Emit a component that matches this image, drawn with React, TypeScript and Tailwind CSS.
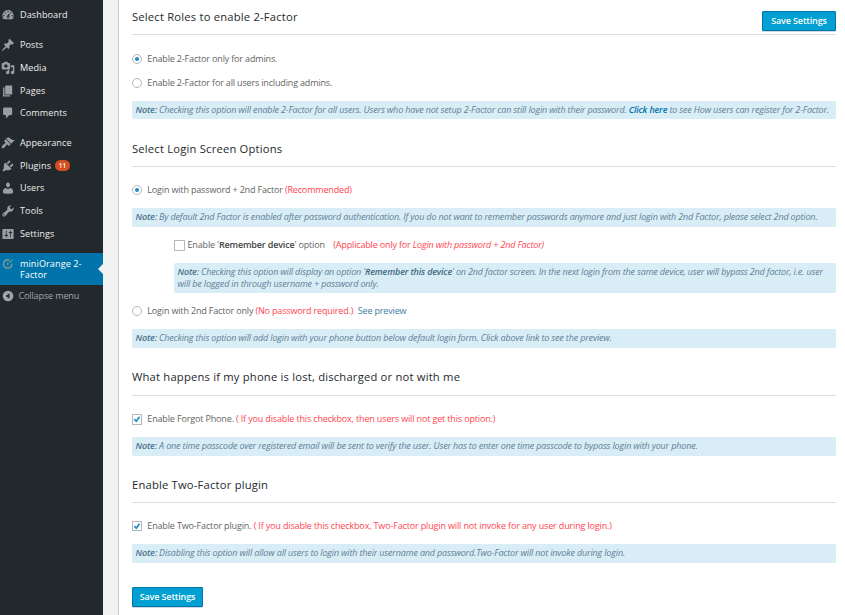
import type { ReactNode } from "react";

const ICONS: Record<string, string> = {
  dashboard:
    "M3.76 16h12.48c1.1-1.37 1.76-3.11 1.76-5 0-4.42-3.58-8-8-8s-8 3.58-8 8c0 1.89.66 3.63 1.76 5zM10 4c.55 0 1 .45 1 1s-.45 1-1 1-1-.45-1-1 .45-1 1-1zM6 6c.55 0 1 .45 1 1s-.45 1-1 1-1-.45-1-1 .45-1 1-1zm8 0c.55 0 1 .45 1 1s-.45 1-1 1-1-.45-1-1 .45-1 1-1zm-5.37 5.55L12 7v6c0 1.1-.9 2-2 2s-2-.9-2-2c0-.57.24-1.08.63-1.45zM4 10c.55 0 1 .45 1 1s-.45 1-1 1-1-.45-1-1 .45-1 1-1zm12 0c.55 0 1 .45 1 1s-.45 1-1 1-1-.45-1-1 .45-1 1-1zm-5 3c0-.55-.45-1-1-1s-1 .45-1 1 .45 1 1 1 1-.45 1-1z",
  posts:
    "M10.44 3.02l1.82-1.82 6.36 6.35-1.83 1.82c-1.05-.68-2.48-.57-3.41.36l-.75.75c-.92.93-1.04 2.35-.35 3.41l-1.83 1.82-2.41-2.41-2.8 2.79c-.42.42-3.38 2.71-3.8 2.29s1.86-3.39 2.28-3.81l2.79-2.79L4.1 9.36l1.83-1.82c1.05.69 2.48.57 3.4-.36l.75-.75c.93-.92 1.05-2.35.36-3.41z",
  media:
    "M13 11V4c0-.55-.45-1-1-1h-1.67L9 1H5L3.67 3H2c-.55 0-1 .45-1 1v7c0 .55.45 1 1 1h10c.55 0 1-.45 1-1zM7 4.5c1.38 0 2.5 1.12 2.5 2.5S8.38 9.5 7 9.5 4.5 8.38 4.5 7 5.62 4.5 7 4.5zM14 6h5v10.5c0 1.38-1.12 2.5-2.5 2.5S14 17.88 14 16.5s1.12-2.5 2.5-2.5c.17 0 .34.02.5.05V9h-3V6zm-4 8.05V13h2v3.5c0 1.38-1.12 2.5-2.5 2.5S7 17.88 7 16.5 8.12 14 9.5 14c.17 0 .34.02.5.05z",
  pages: "M6 15V2h10v13H6zm-1 1h8v2H3V5h2v11z",
  comments: "M5 2h9c1.1 0 2 .9 2 2v7c0 1.1-.9 2-2 2h-2l-5 5v-5H5c-1.1 0-2-.9-2-2V4c0-1.1.9-2 2-2z",
  appearance:
    "M14.48 11.06L7.41 3.99l1.5-1.5c.5-.56 2.3-.47 3.51.32 1.21.8 1.43 1.28 2.91 2.1 1.18.64 2.45 1.26 4.45.85zM13.77 11.77L6.7 4.7 4.93 6.47c-.39.39-.39 1.02 0 1.41l1.06 1.06c.39.39.39 1.03 0 1.42-.6.6-1.43 1.11-2.21 1.69-.35.26-.7.53-1.01.84C1.43 14.23.4 16.08 1.4 17.07c.99 1 2.84-.03 4.18-1.36.31-.31.58-.66.85-1.02.57-.78 1.08-1.61 1.69-2.21.39-.39 1.02-.39 1.41 0l1.06 1.06c.39.39 1.02.39 1.41 0z",
  plugins:
    "M13.11 4.36L9.87 7.6 8 5.73l3.24-3.24c.35-.34 1.05-.2 1.56.32.52.51.66 1.21.31 1.55zm-8 1.77l.91-1.12 9.01 9.01-1.19.84c-.71.71-2.63 1.16-3.82 1.16H6.14L4.9 17.26c-.59.59-1.54.59-2.12 0-.59-.58-.59-1.53 0-2.12l1.24-1.24v-3.88c0-1.13.4-3.19 1.09-3.89zm7.26 3.97l3.24-3.24c.34-.35 1.04-.21 1.55.31.52.51.66 1.21.31 1.55l-3.24 3.25z",
  users:
    "M10 9.25c-2.27 0-2.73-3.44-2.73-3.44C7 4.02 7.82 2 9.97 2c2.16 0 2.98 2.02 2.71 3.81 0 0-.41 3.44-2.68 3.44zm0 2.57L12.72 10c2.39 0 4.52 2.33 4.52 4.53v2.49s-3.65 1.13-7.24 1.13c-3.65 0-7.24-1.13-7.24-1.13v-2.49c0-2.25 1.94-4.48 4.47-4.48z",
  tools:
    "M16.68 9.77c-1.34 1.34-3.3 1.67-4.95.99l-5.41 6.52c-.99.99-2.59.99-3.58 0s-.99-2.59 0-3.57l6.52-5.42c-.68-1.65-.35-3.61.99-4.95 1.28-1.28 3.12-1.62 4.72-1.06l-2.89 2.89 2.82 2.82 2.86-2.87c.53 1.58.18 3.39-1.08 4.65zM3.81 16.21c.4.39 1.04.39 1.43 0 .4-.4.4-1.04 0-1.43-.39-.4-1.03-.4-1.43 0-.39.39-.39 1.03 0 1.43z",
  settings:
    "M18 16V4c0-.55-.45-1-1-1H3c-.55 0-1 .45-1 1v12c0 .55.45 1 1 1h14c.55 0 1-.45 1-1zM8 11h1c.55 0 1 .45 1 1s-.45 1-1 1H8v1.5c0 .28-.22.5-.5.5s-.5-.22-.5-.5V13H6c-.55 0-1-.45-1-1s.45-1 1-1h1V5.5c0-.28.22-.5.5-.5s.5.22.5.5V11zm5-2h-1c-.55 0-1-.45-1-1s.45-1 1-1h1V5.5c0-.28.22-.5.5-.5s.5.22.5.5V7h1c.55 0 1 .45 1 1s-.45 1-1 1h-1v5.5c0 .28-.22.5-.5.5s-.5-.22-.5-.5V9z",
};

function MenuItem({ icon, label, badge, className }: { icon: string; label: string; badge?: string; className: string }) {
  return (
    <a className={`flex items-center text-[#eee] ${className}`}>
      <svg viewBox="0 0 20 20" className="ml-px mt-px h-[14px] w-[14px] shrink-0 fill-[#999ea3]">
        <path fillRule="evenodd" d={ICONS[icon]} />
      </svg>
      <span className="ml-[5px]">{label}</span>
      {badge && (
        <span className="ml-1 flex h-[11px] w-[15px] items-center justify-center rounded-full bg-[#d54e21] text-[6.5px] font-semibold text-white">
          {badge}
        </span>
      )}
    </a>
  );
}

function Heading({ children, className }: { children: ReactNode; className: string }) {
  return (
    <h3 className={`text-[11.2px] font-medium leading-[20px] tracking-[0.21px] text-[#23282d] ${className}`}>
      {children}
    </h3>
  );
}

function Note({ children, className = "" }: { children: ReactNode; className?: string }) {
  return (
    <div className={`whitespace-nowrap rounded-[2px] bg-[#d9edf7] pl-[3.5px] italic text-[#5f7f94] ${className}`}>
      <b className="font-semibold text-[#4a7389]">Note:</b> {children}
    </div>
  );
}

function Radio({ checked }: { checked?: boolean }) {
  return (
    <span className="mr-[5.3px] flex h-[10px] w-[10px] shrink-0 items-center justify-center rounded-full border border-[#b4b9be] bg-white">
      {checked && <span className="h-[4px] w-[4px] rounded-full bg-[#1e8cbe]" />}
    </span>
  );
}

function Checkbox({ checked, className }: { checked?: boolean; className: string }) {
  return (
    <span className={`flex shrink-0 items-center justify-center border border-[#b4b9be] bg-white ${className}`}>
      {checked && (
        <svg viewBox="0 0 8 8" className="h-2 w-2">
          <path d="M1.4 4.1 3.3 6.2 6.6 1.7" fill="none" stroke="#1e8cbe" strokeWidth="1.6" />
        </svg>
      )}
    </span>
  );
}

const Red = ({ children }: { children: ReactNode }) => <span className="text-[#ff4450]">{children}</span>;

function Button() {
  return (
    <button className="flex items-center justify-center rounded-[1px] border border-[#0073aa] bg-[#00a0d2] text-[9px] font-semibold tracking-[-0.14px] text-white shadow-[0_1px_0_#cfdde3]">
      <span className="flex h-[18px] w-full items-center justify-center">Save Settings</span>
    </button>
  );
}

export default function App() {
  return (
    <div className="flex h-[615px] w-[845px] overflow-hidden bg-white font-['Open_Sans',sans-serif]">
      <nav className="flex w-[103px] shrink-0 flex-col bg-[#23282d] pt-[3px] text-[9.1px] font-medium leading-[11px] tracking-[0.08px]">
        <MenuItem icon="dashboard" label="Dashboard" className="h-[23px]" />
        <MenuItem icon="posts" label="Posts" className="mt-[7px] h-[23px]" />
        <MenuItem icon="media" label="Media" className="h-[23px]" />
        <MenuItem icon="pages" label="Pages" className="h-[23px]" />
        <MenuItem icon="comments" label="Comments" className="h-[21px]" />
        <MenuItem icon="appearance" label="Appearance" className="mt-[8px] h-[23px]" />
        <MenuItem icon="plugins" label="Plugins" badge="11" className="h-[23px]" />
        <MenuItem icon="users" label="Users" className="h-[21px]" />
        <MenuItem icon="tools" label="Tools" className="mt-px h-[23px]" />
        <MenuItem icon="settings" label="Settings" className="h-[23px]" />
        <a className="mt-[8px] flex h-[32px] bg-[#0073aa] text-white">
          <svg viewBox="0 0 12 12" className="ml-[2px] mt-[5px] h-3 w-3 shrink-0" fill="none">
            <path d="M7.4 2.1A4.2 4.2 0 1 0 9.9 5.6" stroke="#8d9a97" strokeWidth="1.3" />
            <path d="M5.8 4.6v2.6" stroke="#8d9a97" strokeWidth="1.1" />
            <path d="M7.2 4.8 10.6 1.8" stroke="#4fa386" strokeWidth="1.3" />
          </svg>
          <span className="ml-[6px] mt-[5px] flex w-[78px] flex-col">
            <span className="h-[11px]">miniOrange 2-</span>
            <span className="h-[11px]">Factor</span>
          </span>
          <span className="mt-[11px] h-0 w-0 border-y-[5px] border-r-[5px] border-y-transparent border-r-[#f1f1f1]" />
        </a>
        <a className="flex h-[21px] items-center font-normal tracking-[-0.17px] text-[#a0a5aa]">
          <svg viewBox="0 0 12 12" className="ml-[2px] mt-px h-3 w-3 shrink-0">
            <circle cx="6" cy="6" r="5.3" fill="#a0a5aa" />
            <path d="M7.5 3.3v5.4L3.7 6z" fill="#23282d" />
          </svg>
          <span className="ml-[4.5px]">Collapse menu</span>
        </a>
      </nav>
      <div className="w-4 shrink-0 border-r border-[#ccc] bg-[#f1f1f1]" />
      <main className="w-[717px] pl-[13px] text-[9px] tracking-[-0.163px] text-[#636363]">
        <div className="flex h-[35px] border-b border-[#ddd]">
          <Heading className="mt-[7px] flex-1">Select Roles to enable 2-Factor</Heading>
          <div className="mt-[11px] grid h-[20px] w-[74px]">
            <Button />
          </div>
        </div>
        <label className="mt-[12px] flex h-6 items-center">
          <Radio checked />
          Enable 2-Factor only for admins.
        </label>
        <label className="flex h-6 items-center">
          <Radio />
          Enable 2-Factor for all users including admins.
        </label>
        <Note className="mt-[6px] h-[18px] leading-[17px]">
          Checking this option will enable 2-Factor for all users. Users who have not setup 2-Factor can still login
          with their password. <b className="font-semibold text-[#0073aa]">Click here</b> to see How users can register
          for 2-Factor.
        </Note>

        <Heading className="mt-[20px] h-[28px] border-b border-[#ddd]">Select Login Screen Options</Heading>
        <label className="mt-[11px] flex h-6 items-center">
          <Radio checked />
          <span>
            Login with password + 2nd Factor <Red>(Recommended)</Red>
          </span>
        </label>
        <Note className="mt-[6px] h-[19px] leading-[18px]">
          By default 2nd Factor is enabled after password authentication. If you do not want to remember passwords
          anymore and just login with 2nd Factor, please select 2nd option.
        </Note>
        <div className="mt-[6px] pl-[42px]">
          <label className="flex h-6 items-center">
            <Checkbox className="mr-[2.5px] h-[11px] w-[11px]" />
            <span>
              Enable '<b className="font-semibold text-[#444]">Remember device</b>' option
            </span>
            <span className="ml-[8.5px]">
              <Red>
                (Applicable only for <i>Login with password + 2nd Factor)</i>
              </Red>
            </span>
          </label>
          <Note className="mt-[6px] h-[30px] pt-[3px] leading-[12px]">
            Checking this option will display an option '
            <b className="font-semibold text-[#3d687f]">Remember this device</b>' on 2nd factor screen. In the next
            login from the same device, user will bypass 2nd factor, i.e. user
            <br />
            will be logged in through username + password only.
          </Note>
        </div>
        <label className="mt-[6px] flex h-6 items-center">
          <Radio />
          <span>
            Login with 2nd Factor only <Red>(No password required.)</Red>
            <span className="ml-[4.5px] text-[#3a7ca0]">See preview</span>
          </span>
        </label>
        <Note className="mt-[6px] h-[19px] leading-[18px]">
          Checking this option will add login with your phone button below default login form. Click above link to see
          the preview.
        </Note>

        <Heading className="mt-[19px] h-[29px] border-b border-[#ddd]">
          What happens if my phone is lost, discharged or not with me
        </Heading>
        <label className="mt-[11px] flex h-6 items-center">
          <Checkbox checked className="mr-[5.3px] h-[11px] w-[10px]" />
          <span className="tracking-[-0.15px]">
            Enable Forgot Phone. <Red>( If you disable this checkbox, then users will not get this option.)</Red>
          </span>
        </label>
        <Note className="mt-[6px] h-[19px] leading-[18px]">
          A one time passcode over registered email will be sent to verify the user. User has to enter one time passcode
          to bypass login with your phone.
        </Note>

        <Heading className="mt-[19px] h-[28px] border-b border-[#ddd]">Enable Two-Factor plugin</Heading>
        <label className="mt-[11px] flex h-6 items-center">
          <Checkbox checked className="mr-[5.3px] h-[10px] w-[10px]" />
          <span className="tracking-[-0.15px]">
            Enable Two-Factor plugin.{" "}
            <Red>( If you disable this checkbox, Two-Factor plugin will not invoke for any user during login.)</Red>
          </span>
        </label>
        <Note className="mt-[6px] h-[19px] leading-[18px]">
          Disabling this option will allow all users to login with their username and password.Two-Factor will not
          invoke during login.
        </Note>
        <div className="mt-[24px] grid h-[20px] w-[71px]">
          <Button />
        </div>
      </main>
    </div>
  );
}
